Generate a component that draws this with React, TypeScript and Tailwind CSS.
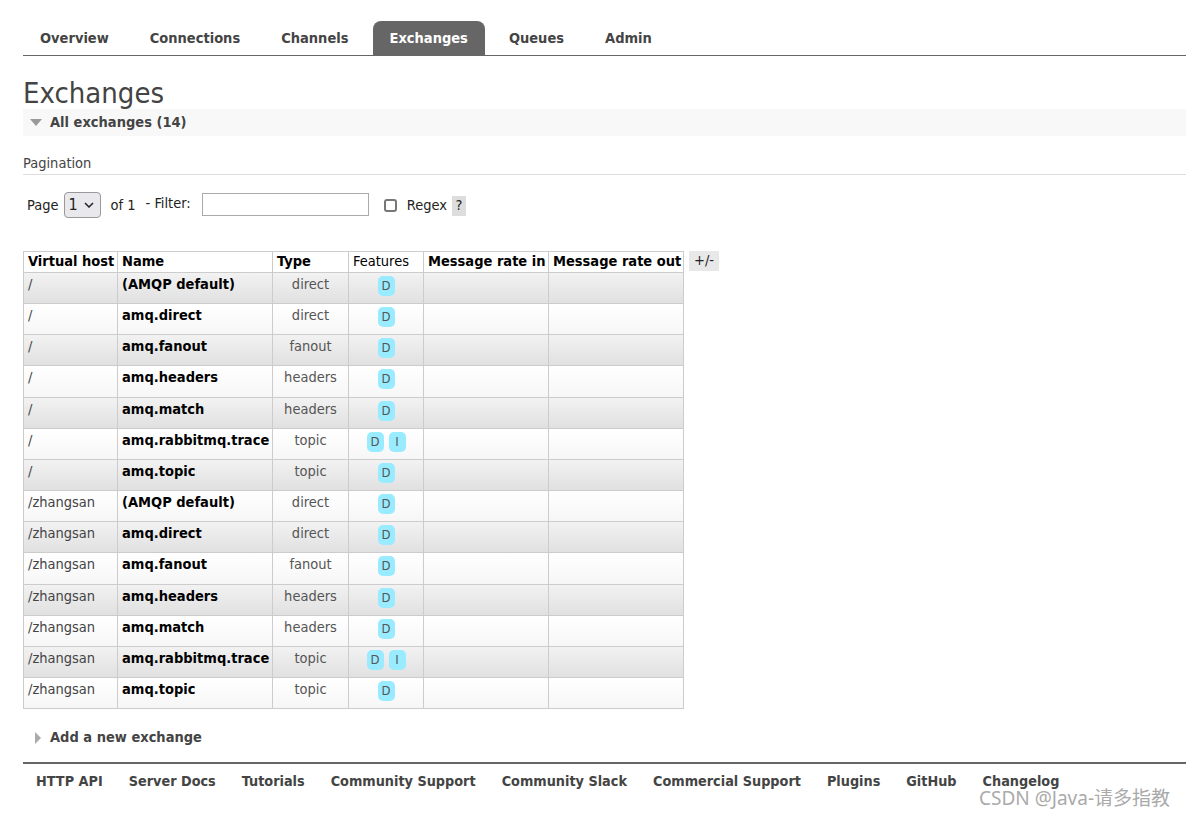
import React from "react";

const font = "font-['DejaVu_Sans_Condensed','DejaVu_Sans',Verdana,sans-serif]";

const tabs = ["Overview", "Connections", "Channels", "Exchanges", "Queues", "Admin"];

type Row = { vhost: string; name: string; type: string; internal?: boolean };

const names: [string, string, boolean?][] = [
  ["(AMQP default)", "direct"],
  ["amq.direct", "direct"],
  ["amq.fanout", "fanout"],
  ["amq.headers", "headers"],
  ["amq.match", "headers"],
  ["amq.rabbitmq.trace", "topic", true],
  ["amq.topic", "topic"],
];

const rows: Row[] = ["/", "/zhangsan"].flatMap((vhost) =>
  names.map(([name, type, internal]) => ({ vhost, name, type, internal }))
);

const footerLinks = [
  "HTTP API",
  "Server Docs",
  "Tutorials",
  "Community Support",
  "Community Slack",
  "Commercial Support",
  "Plugins",
  "GitHub",
  "Changelog",
];

const headers: [string, boolean][] = [
  ["Virtual host", true],
  ["Name", true],
  ["Type", true],
  ["Features", false],
  ["Message rate in", true],
  ["Message rate out", true],
];

function Badge({ label }: { label: string }) {
  return (
    <span className="inline-flex h-[20px] w-[17px] items-center justify-center rounded-[5px] bg-[#99ebff] text-[13px] text-[#555]">
      {label}
    </span>
  );
}

export default function App() {
  return (
    <div className={`${font} relative min-h-[816px] bg-white pl-[23px] pt-[21px] text-[14.5px] text-[#444]`}>
      {/* nav */}
      <div className="flex h-[35px] items-stretch gap-[7px] border-b border-[#666] text-[14.5px]">
        {tabs.map((t) =>
          t === "Exchanges" ? (
            <div
              key={t}
              className="flex items-center rounded-t-[8px] bg-[#666] px-[17px] pt-[1px] font-bold text-white"
            >
              {t}
            </div>
          ) : (
            <div key={t} className="flex items-center px-[17px] pt-[1px] font-bold text-[#444]">
              {t}
            </div>
          )
        )}
      </div>

      <h1 className="mt-[22px] text-[29px] leading-[31px] text-[#444]">Exchanges</h1>

      <div className="flex h-[27px] items-center bg-[#f8f8f8] pl-[7px]">
        <span className="mr-[8px] h-0 w-0 border-x-[6px] border-t-[7px] border-x-transparent border-t-[#999]" />
        <span className="font-bold">All exchanges (14)</span>
      </div>

      <div className="mt-[19px] border-b border-[#ddd] pb-[2px] leading-[17px]">Pagination</div>

      <div className="mt-[17px] flex items-center pl-[4px] text-[#222]">
        <span className="mt-[2px] text-[#222]">Page</span>
        <div className="ml-[5px] flex h-[26px] w-[37px] items-center justify-between rounded-[4px] border border-[#999] bg-[#e9e9ed] pl-[4px] pr-[6px]">
          <span className="text-[16px] text-[#222]">1</span>
          <svg width="10" height="6" viewBox="0 0 10 6">
            <path d="M1 1l4 4 4-4" fill="none" stroke="#222" strokeWidth="1.5" />
          </svg>
        </div>
        <span className="ml-[10px] mt-[1px] text-[#222]">of 1</span>
        <span className="ml-[10px] -mt-[2px] text-[#222]">- Filter:</span>
        <div className="ml-[11px] -mt-[2px] h-[23px] w-[167px] border border-[#aaa] bg-white" />
        <span className="ml-[15px] h-[13px] w-[13px] rounded-[3px] border-2 border-[#777] bg-white" />
        <span className="ml-[10px] mt-[1px] text-[#222]">Regex</span>
        <span className="ml-[5px] mt-[1px] flex h-[20px] w-[14px] items-center justify-center bg-[#ddd]">?</span>
      </div>

      <div className="mt-[33px] flex items-start">
        <table className="w-[661px] table-fixed border-collapse border border-[#ccc]">
          <colgroup>
            <col className="w-[94px]" />
            <col className="w-[155px]" />
            <col className="w-[76px]" />
            <col className="w-[75px]" />
            <col className="w-[125px]" />
            <col className="w-[135px]" />
          </colgroup>
          <thead>
            <tr className="bg-white text-left">
              {headers.map(([h, bold]) => (
                <th
                  key={h}
                  className={`border border-[#ccc] p-0 text-black ${bold ? "font-bold" : "font-normal"}`}
                >
                  <div className="flex h-[20px] items-center overflow-visible whitespace-nowrap px-[4px]">{h}</div>
                </th>
              ))}
            </tr>
          </thead>
          <tbody>
            {rows.map((r, i) => {
              const h = i === 3 || i === 9 ? "h-[31px]" : "h-[30px]";
              return (
                <tr
                  key={i}
                  className={
                    i % 2 === 0
                      ? "bg-linear-to-b from-[#f2f2f2] to-[#e0e0e0]"
                      : "bg-linear-to-b from-[#ffffff] to-[#f6f6f6]"
                  }
                >
                  <td className="border border-[#ccc] p-0 align-top text-[#444]">
                    <div className={`${h} px-[4px] pt-[2px] leading-[18px]`}>{r.vhost}</div>
                  </td>
                  <td className="border border-[#ccc] p-0 align-top font-bold text-black">
                    <div className={`${h} whitespace-nowrap px-[4px] pt-[2px] leading-[18px]`}>{r.name}</div>
                  </td>
                  <td className="border border-[#ccc] p-0 text-center align-top text-[#555]">
                    <div className={`${h} px-[4px] pt-[2px] leading-[18px]`}>{r.type}</div>
                  </td>
                  <td className="border border-[#ccc] p-0 align-top">
                    <div className={`${h} flex justify-center gap-[5px] pt-[3px]`}>
                      <Badge label="D" />
                      {r.internal && <Badge label="I" />}
                    </div>
                  </td>
                  <td className="border border-[#ccc] p-0" />
                  <td className="border border-[#ccc] p-0" />
                </tr>
              );
            })}
          </tbody>
        </table>
        <div className="ml-[5px] flex h-[20px] w-[30px] items-center justify-center bg-[#e8e8e8] text-[#222]">+/-</div>
      </div>

      <div className="mt-[18px] flex items-center pl-[12px]">
        <span className="mr-[9px] h-0 w-0 border-y-[6px] border-l-[6px] border-y-transparent border-l-[#aaa]" />
        <span className="font-bold">Add a new exchange</span>
      </div>

      <div className="mt-[13px] flex border-t-2 border-[#666] pt-[8px] text-[14.3px]">
        {footerLinks.map((l) => (
          <span key={l} className="px-[13px] font-bold leading-[18px] text-[#444]">
            {l}
          </span>
        ))}
      </div>

      <div className="absolute bottom-[4px] right-[16px] font-['Noto_Sans','Noto_Sans_CJK_SC',sans-serif] text-[19px] text-[#aaa] [text-shadow:0_0_1px_#fff]">
        CSDN @Java-请多指教
      </div>
    </div>
  );
}
